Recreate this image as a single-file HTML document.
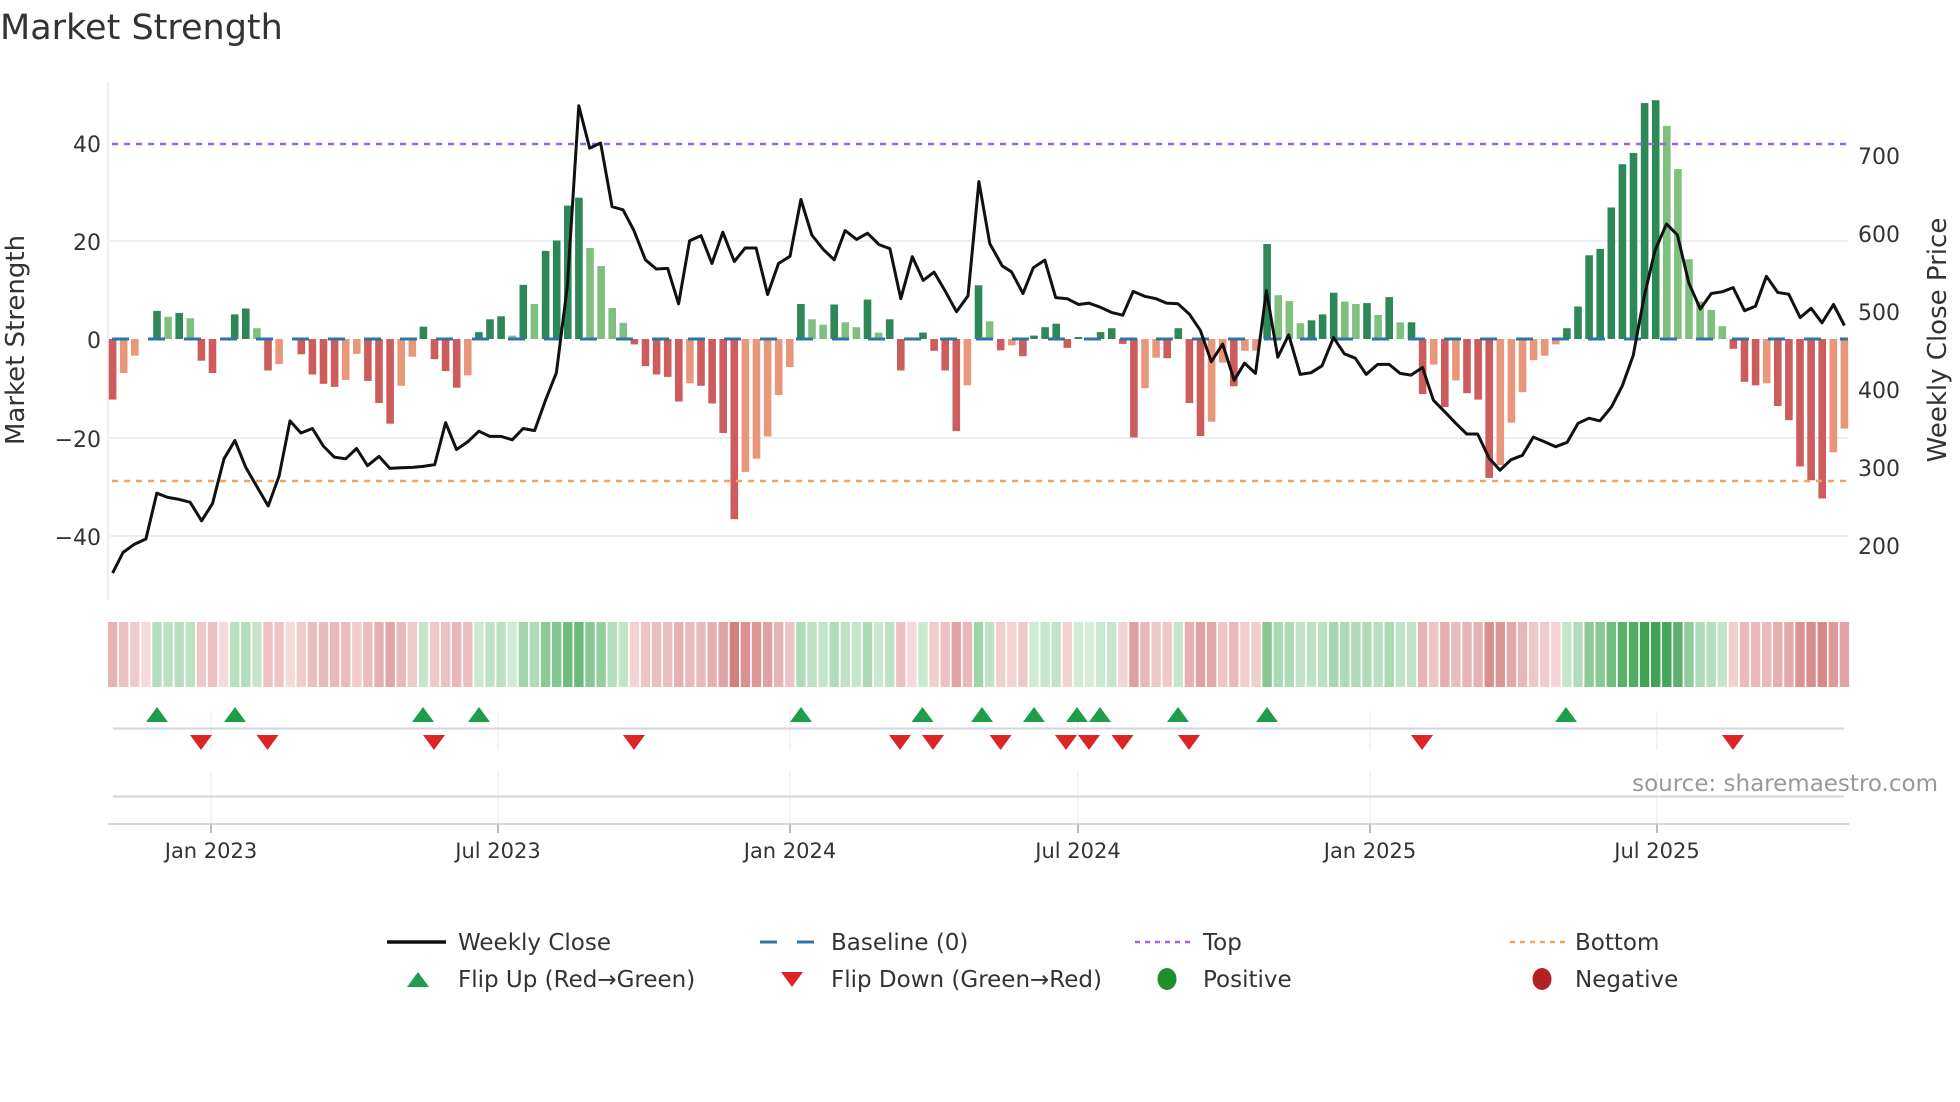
<!DOCTYPE html>
<html><head><meta charset="utf-8">
<style>
html,body{margin:0;padding:0;background:#fff;}
svg{display:block;font-family:"DejaVu Sans","Liberation Sans",sans-serif;}
</style></head>
<body>
<svg id="s" width="1960" height="1102" viewBox="0 0 1960 1102" xmlns="http://www.w3.org/2000/svg">
<rect width="1960" height="1102" fill="#fff"/>
<text x="0" y="39" font-size="35" fill="#333">Market Strength</text>
<g stroke="#eceef1" stroke-width="2">
<line x1="110" y1="241" x2="1848" y2="241"/>
<line x1="110" y1="438" x2="1848" y2="438"/>
<line x1="110" y1="536" x2="1848" y2="536"/>
</g>
<line x1="108" y1="82" x2="108" y2="600" stroke="#eceef1" stroke-width="2"/>
<g id="bars"></g>
<line x1="112" y1="339" x2="1848" y2="339" stroke="#2f74a8" stroke-width="3" stroke-dasharray="17 19"/>
<line x1="112" y1="144" x2="1848" y2="144" stroke="#9d63e0" stroke-width="2.6" stroke-dasharray="6 6"/>
<line x1="112" y1="481" x2="1848" y2="481" stroke="#f4a261" stroke-width="2.6" stroke-dasharray="6 6"/>
<polyline id="price" fill="none" stroke="#111" stroke-width="3" stroke-linejoin="round"/>
<g font-size="22" fill="#333" text-anchor="end">
<text x="101" y="152">40</text>
<text x="101" y="250">20</text>
<text x="101" y="348">0</text>
<text x="101" y="447">−20</text>
<text x="101" y="545">−40</text>
</g>
<g font-size="22" fill="#333">
<text x="1858" y="164">700</text>
<text x="1858" y="242">600</text>
<text x="1858" y="320">500</text>
<text x="1858" y="398">400</text>
<text x="1858" y="476">300</text>
<text x="1858" y="554">200</text>
</g>
<text transform="translate(24,340) rotate(-90)" font-size="26" fill="#333" text-anchor="middle">Market Strength</text>
<text transform="translate(1946,340) rotate(-90)" font-size="26" fill="#333" text-anchor="middle">Weekly Close Price</text>
<g id="heat"></g>
<g stroke="#eef0f3" stroke-width="1.5">
<line x1="211" y1="711" x2="211" y2="750"/><line x1="498" y1="711" x2="498" y2="750"/><line x1="790" y1="711" x2="790" y2="750"/>
<line x1="1078" y1="711" x2="1078" y2="750"/><line x1="1370" y1="711" x2="1370" y2="750"/><line x1="1657" y1="711" x2="1657" y2="750"/>
<line x1="211" y1="772" x2="211" y2="824"/><line x1="498" y1="772" x2="498" y2="824"/><line x1="790" y1="772" x2="790" y2="824"/>
<line x1="1078" y1="772" x2="1078" y2="824"/><line x1="1370" y1="772" x2="1370" y2="824"/><line x1="1657" y1="772" x2="1657" y2="824"/>
</g>
<line x1="113" y1="728.5" x2="1844" y2="728.5" stroke="#d3d6db" stroke-width="2"/>
<line x1="113" y1="796.5" x2="1844" y2="796.5" stroke="#d3d6db" stroke-width="2"/>
<line x1="108" y1="824" x2="1849" y2="824" stroke="#d3d6db" stroke-width="2"/>
<g stroke="#b8bcc2" stroke-width="2">
<line x1="211" y1="824" x2="211" y2="833"/><line x1="498" y1="824" x2="498" y2="833"/><line x1="790" y1="824" x2="790" y2="833"/>
<line x1="1078" y1="824" x2="1078" y2="833"/><line x1="1370" y1="824" x2="1370" y2="833"/><line x1="1657" y1="824" x2="1657" y2="833"/>
</g>
<g id="marks"></g>
<g font-size="21" fill="#333" text-anchor="middle">
<text x="211" y="858">Jan 2023</text>
<text x="498" y="858">Jul 2023</text>
<text x="790" y="858">Jan 2024</text>
<text x="1078" y="858">Jul 2024</text>
<text x="1370" y="858">Jan 2025</text>
<text x="1657" y="858">Jul 2025</text>
</g>
<text x="1938" y="791" font-size="23" fill="#999" text-anchor="end">source: sharemaestro.com</text>
<g font-size="23" fill="#333">
<line x1="387" y1="942" x2="446" y2="942" stroke="#111" stroke-width="3.5"/>
<text x="458" y="950">Weekly Close</text>
<line x1="760" y1="942" x2="818" y2="942" stroke="#2f74a8" stroke-width="3" stroke-dasharray="17 20"/>
<text x="831" y="950">Baseline (0)</text>
<line x1="1135" y1="942" x2="1193" y2="942" stroke="#9d63e0" stroke-width="2.6" stroke-dasharray="5 5"/>
<text x="1203" y="950">Top</text>
<line x1="1510" y1="942" x2="1568" y2="942" stroke="#f4a261" stroke-width="2.6" stroke-dasharray="5 5"/>
<text x="1575" y="950">Bottom</text>
<polygon points="407,987 429,987 418,972" fill="#1e9e4a"/>
<text x="458" y="987">Flip Up (Red→Green)</text>
<polygon points="781,972 803,972 792,987" fill="#dc2626"/>
<text x="831" y="987">Flip Down (Green→Red)</text>
<ellipse cx="1167" cy="979" rx="9.5" ry="11" fill="#1f8f2e"/>
<text x="1203" y="987">Positive</text>
<ellipse cx="1542" cy="979" rx="9.5" ry="11" fill="#b22222"/>
<text x="1575" y="987">Negative</text>
</g>
</svg>
<script>
(function(){
var NS="http://www.w3.org/2000/svg";
var v=[-12.3,-6.9,-3.4,0,5.7,4.5,5.3,4.2,-4.4,-6.9,0,5,6.2,2.2,-6.4,-5.1,0,-3.1,-7.2,-9.1,-9.7,-8.3,-3,-8.5,-13,-17.2,-9.5,-3.6,2.5,-4.1,-6.5,-9.9,-7.4,1.4,4,4.6,0.7,11,7.1,17.9,20,27.1,28.7,18.5,14.8,6.3,3.3,-1.1,-5.5,-7.2,-7.7,-12.7,-9,-9.5,-13.1,-19.1,-36.6,-27,-24.3,-19.8,-11.4,-5.7,7.1,4,2.9,7,3.4,2.4,8,1.3,4,-6.4,0,1.3,-2.4,-6.4,-18.7,-9.4,10.9,3.6,
-2.3,-1.3,-3.5,0.7,2.4,3.1,-1.8,0.4,0,1.4,2.2,-1,-20,-10,-3.8,-3.9,2.2,-13,-19.7,-16.8,-4.8,-9.6,-2.4,-2.4,19.3,8.9,7.7,3.2,3.8,5,9.4,7.6,7.1,7.3,4.9,8.5,3.4,3.4,-11.2,-5.2,-13.8,-8.4,-11,-12.3,-28.2,-25.6,-17,-10.8,-4.3,-3.4,-1.1,2.2,6.6,17,18.3,26.7,35.5,37.8,47.9,48.5,43.3,34.5,16.2,7.6,5.9,2.6,-2,-8.7,-9.4,-9,-13.6,-16.5,-25.9,-28.7,-32.4,-23,-18.2];
var light=[1,2,5,7,13,15,21,22,26,27,32,36,38,43,44,45,46,52,57,58,59,60,61,63,64,66,67,69,77,79,
81,93,94,99,100,102,103,105,106,107,111,112,114,116,119,121,125,126,127,128,129,130,140,141,142,143,144,145,149,155,156];
var L={};light.forEach(function(i){L[i]=1;});
var bars=document.getElementById('bars'),heat=document.getElementById('heat');
var x0=112.6,step=(1844.4-112.6)/156;
var last=-1;
function mix(a,b,t){return 'rgb('+a.map(function(c,k){return Math.round(c+(b[k]-c)*t);}).join(',')+')';}
for(var i=0;i<v.length;i++){
 var x=x0+i*step,val=v[i];
 if(val!==0){
  var r=document.createElementNS(NS,'rect');
  var h=Math.abs(val)*4.924;
  r.setAttribute('x',(x-3.8).toFixed(1));r.setAttribute('width','7.6');
  r.setAttribute('y',(val>0?339-h:339).toFixed(1));r.setAttribute('height',h.toFixed(1));
  var c=val>0?(L[i]?'#80c07f':'#2e8756'):(L[i]?'#e9977a':'#cd5c5c');
  r.setAttribute('fill',c);bars.appendChild(r);
  last=val>0?1:-1;
 }
 var sgn=val>0?1:(val<0?-1:last);
 var t=Math.pow(Math.min(Math.abs(val)/45,1),0.75);
 var col=sgn>0?mix([214,238,216],[64,164,84],t):mix([245,218,218],[206,112,112],t);
 var hc=document.createElementNS(NS,'rect');
 hc.setAttribute('x',(x-4.7).toFixed(1));hc.setAttribute('width','9.4');
 hc.setAttribute('y','622');hc.setAttribute('height','65');hc.setAttribute('fill',col);
 heat.appendChild(hc);
}
var p1=[[22,1432],[40,1372],[60,1348],[80,1333],[99,1200],[118,1212],[138,1218],[157,1226],[177,1280],[196,1230],[216,1100],[235,1047],[254,1125],[273,1180],[293,1237],[312,1150],[331,990],[350,1025],[370,1012],[389,1063],[408,1095],[428,1100],[447,1070],[466,1120],[486,1093],[505,1128],[524,1126],[544,1125],[563,1122],[583,1117],[602,995],[621,1073],[641,1050],[660,1020],[679,1035],[699,1035],[718,1045],[737,1012],[757,1018],[776,930],[795,850],[814,600],[834,75],[853,198],[872,183],[892,368],[911,377],[930,437],[950,522],[969,549],[989,547],[1008,650],[1027,467],[1047,452],[1066,533],[1085,442],[1105,527],[1124,488],[1143,488],[1163,623],[1182,533],[1202,512],[1221,347],[1240,450],[1260,492],[1279,522],[1298,437],[1318,463],[1337,445],[1357,478],[1376,490],[1395,635],[1415,513],[1434,582],[1453,558],[1473,615],[1492,673],[1512,627],[1531,295],[1550,475]];
var p2=[[4,540],[20,557],[40,620],[58,545],[78,523],[97,632],[117,635],[137,652],[155,648],[175,660],[194,675],[214,683],[232,614],[252,628],[272,635],[290,648],[310,650],[330,680],[349,727],[368,818],[388,767],[408,872],[426,822],[445,852],[464,612],[484,805],[503,740],[523,855],[542,850],[561,830],[581,748],[600,795],[619,808],[638,855],[658,826],[678,826],[697,852],[716,857],[736,835],[755,930],[774,962],[794,997],[813,1028],[832,1028],[852,1098],[871,1133],[890,1103],[910,1090],[929,1037],[948,1050],[968,1065],[988,1052],[1007,997],[1026,982],[1045,990],[1065,950],[1084,888],[1103,800],[1122,630],[1141,495],[1161,418],[1180,450],[1200,590],[1220,665],[1239,620],[1258,615],[1277,603],[1297,670],[1316,657],[1335,570],[1355,617],[1374,622],[1394,690],[1413,663],[1432,705],[1452,652],[1471,713]];
var pts=[];
p1.forEach(function(p){pts.push((100+p[0]/1.742).toFixed(1)+','+(80+p[1]/2.904).toFixed(1));});
p2.forEach(function(p){pts.push((1000+p[0]/1.742).toFixed(1)+','+(80+p[1]/2.904).toFixed(1));});
document.getElementById('price').setAttribute('points',pts.join(' '));
var marks=document.getElementById('marks');
var ups=[157,235,423,479,801,922.5,982,1034,1077,1100,1178,1267,1566];
var downs=[201,267.5,434,634,900,933,1000.6,1066,1089,1122.5,1189,1422,1733];
ups.forEach(function(x){var p=document.createElementNS(NS,'polygon');
 p.setAttribute('points',(x-11)+',722 '+(x+11)+',722 '+x+',707');p.setAttribute('fill','#1e9e4a');marks.appendChild(p);});
downs.forEach(function(x){var p=document.createElementNS(NS,'polygon');
 p.setAttribute('points',(x-11)+',735 '+(x+11)+',735 '+x+',750');p.setAttribute('fill','#dc2626');marks.appendChild(p);});
})();
</script>
</body></html>
